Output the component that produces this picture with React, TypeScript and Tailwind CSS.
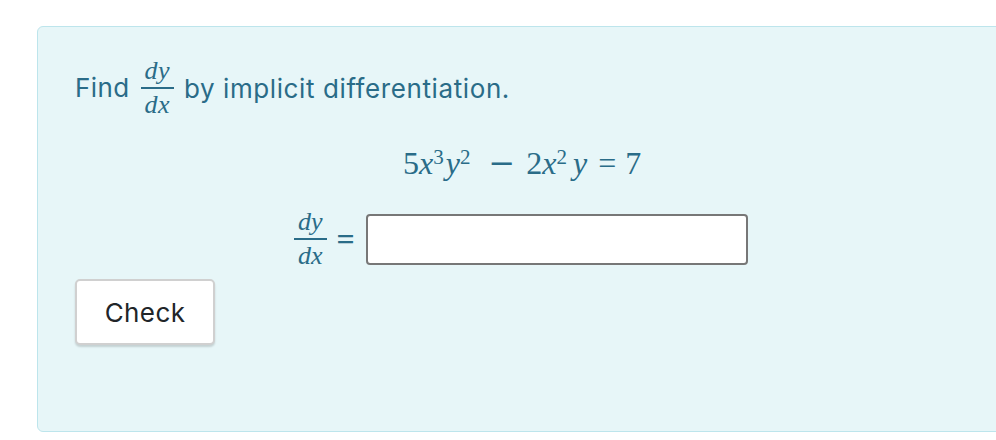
import React from "react";

const serif = { fontFamily: '"Liberation Serif", "Times New Roman", serif' };

function Frac({ num, den }: { num: string; den: string }) {
  return (
    <span className="inline-flex flex-col items-center align-middle italic text-[26px] leading-[24px]" style={serif}>
      <span className="px-[4px]">{num}</span>
      <span className="h-[2px] w-full bg-[#2a6c88] my-[4px]" />
      <span className="px-[4px]">{den}</span>
    </span>
  );
}

export default function App() {
  return (
    <div className="w-[996px] h-[440px] overflow-hidden bg-white pt-[26px] pl-[37px]">
      <div
        className="w-[1000px] h-[406px] rounded-[6px] border border-[#bde5ec] bg-[#e7f6f8] text-[#2a6c88] pl-[37px] pt-[32px]"
        style={{ fontFamily: 'Inter, "Liberation Sans", Arial, sans-serif' }}
      >
        <div className="flex items-center text-[26px] leading-none tracking-[0.4px]">
          <span>Find</span>
          <span className="ml-[11px] mr-[10px]">
            <Frac num="dy" den="dx" />
          </span>
          <span className="pt-[2px] tracking-[0.6px]">by implicit differentiation.</span>
        </div>
        <div className="mt-[26px] pl-[328px] text-[32px] leading-[40px]" style={serif}>
          <span>
            5<i>x</i>
            <sup className="text-[21px]">3</sup>
            <i className="ml-[2px]">y</i>
            <sup className="text-[21px]">2</sup>
            <span className="ml-[18px] mr-[11px]" style={{ fontFamily: '"DejaVu Serif", serif' }}>−</span>2<i>x</i>
            <sup className="text-[21px]">2</sup>
            <i className="ml-[6px]">y</i>
            <span className="ml-[11px] mr-[9px]">=</span>7
          </span>
        </div>
        <div className="mt-[27px] flex items-center pl-[219px]">
          <Frac num="dy" den="dx" />
          <span className="ml-[10px] mr-[11px] text-[32px] leading-none font-bold" style={serif}>=</span>
          <div className="w-[382px] h-[51px] rounded-[4px] border-2 border-[#777777] bg-white" />
        </div>
        <button className="mt-[11px] w-[140px] h-[66px] rounded-[5px] border-2 border-[#d0d0d0] bg-white text-[26px] tracking-[0.4px] text-[#212529] shadow-[0_2px_2px_rgba(0,0,0,0.15)]">
          Check
        </button>
      </div>
    </div>
  );
}
